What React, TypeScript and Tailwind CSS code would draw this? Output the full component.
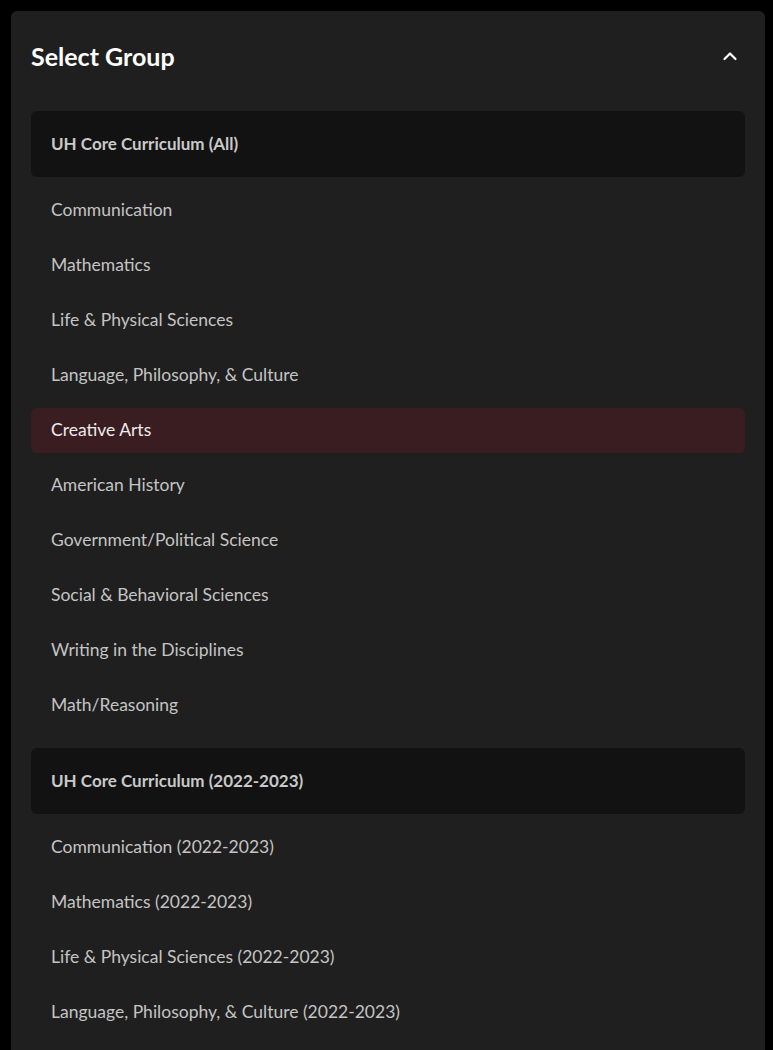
const groups = [
  {
    title: "UH Core Curriculum (All)",
    items: [
      "Communication",
      "Mathematics",
      "Life & Physical Sciences",
      "Language, Philosophy, & Culture",
      "Creative Arts",
      "American History",
      "Government/Political Science",
      "Social & Behavioral Sciences",
      "Writing in the Disciplines",
      "Math/Reasoning",
    ],
  },
  {
    title: "UH Core Curriculum (2022-2023)",
    items: [
      "Communication (2022-2023)",
      "Mathematics (2022-2023)",
      "Life & Physical Sciences (2022-2023)",
      "Language, Philosophy, & Culture (2022-2023)",
    ],
  },
];

export default function App() {
  const active = "Creative Arts";

  return (
    <main className="min-h-screen h-[1050px] overflow-hidden bg-black pl-[11px] pr-[8px] pt-[11px] font-['Lato','Noto_Sans',sans-serif]">
      <section className="rounded-md bg-[#1f1f1f] px-5 pb-10">
        <div className="flex items-center justify-between h-[92px]">
          <h2 className="text-[25px] font-bold text-white">Select Group</h2>
          <svg width="16" height="16" viewBox="0 0 16 16" className="mr-[7px] mt-[-2px]">
            <path d="M2.5 11 L8 5.5 L13.5 11" fill="none" stroke="white" strokeWidth="2.2" strokeLinecap="round" strokeLinejoin="round" />
          </svg>
        </div>

        <div className="mt-2 flex flex-col">
          {groups.map((g, gi) => (
            <div key={g.title} className={gi > 0 ? "mt-5" : ""}>
              <div className="flex h-[66px] items-center rounded-md bg-[#121212] px-5">
                <span className="text-[17px] font-bold text-[#c9c9c9]">{g.title}</span>
              </div>
              <ul className="mt-[11px] flex flex-col gap-[10px]">
                {g.items.map((it) => (
                  <li
                    key={it}
                    className={
                      it === active
                        ? "flex h-[45px] items-center rounded-md bg-[#3a1d21] px-5 text-[17.5px] text-[#ececec]"
                        : "flex h-[45px] items-center rounded-md px-5 text-[17.5px] text-[#c4c4c4]"
                    }
                  >
                    {it}
                  </li>
                ))}
              </ul>
            </div>
          ))}
        </div>
      </section>
    </main>
  );
}
